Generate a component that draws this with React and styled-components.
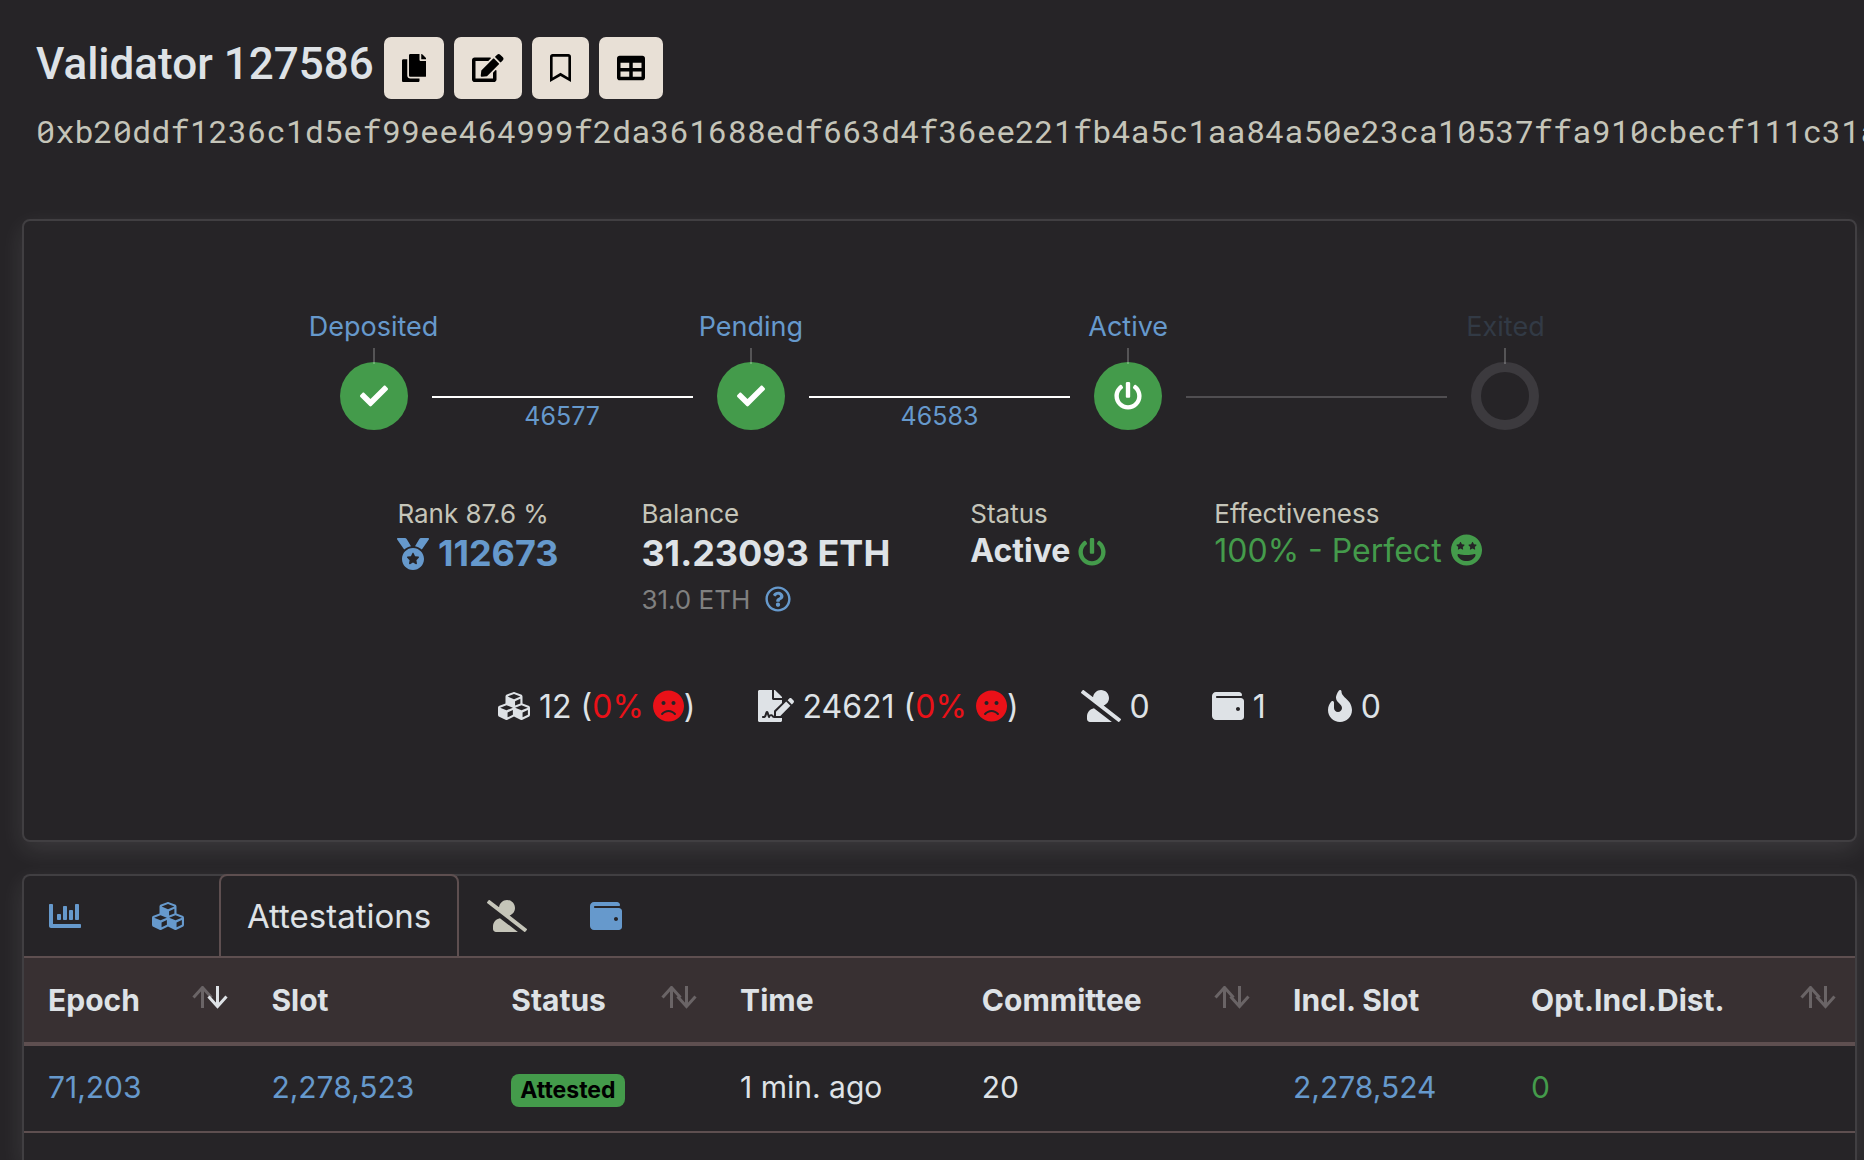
import React from 'react';
import styled, { createGlobalStyle, css } from 'styled-components';
import {
  FaCopy, FaEdit, FaRegBookmark, FaTable, FaCheck, FaPowerOff, FaMedal,
  FaRegQuestionCircle, FaGrinStars, FaCubes, FaFrown, FaFileSignature,
  FaUserSlash, FaWallet, FaFire, FaChartBar,
} from 'react-icons/fa';

const c = {
  bg: '#262427',
  line: '#413f42',
  accentLine: '#5e4f50',
  head: '#383032',
  text: '#dee2e6',
  muted: '#c5c5b9',
  dim: '#808080',
  blue: '#6699cc',
  green: '#449b4b',
  red: '#ea1118',
  cream: '#e8e0d6',
};

const Global = createGlobalStyle`
  *, *::before, *::after { box-sizing: border-box; }
  body {
    margin: 0;
    background: ${c.bg};
    color: ${c.text};
    font-family: Inter, "Liberation Sans", sans-serif;
    font-size: 32px;
    overflow: hidden;
  }
  a { color: ${c.blue}; text-decoration: none; }
  button { font: inherit; color: inherit; border: 0; background: none; padding: 0; cursor: pointer; }
  svg { vertical-align: -0.125em; }
`;

/* Icons whose glyph box is not square keep their own aspect ratio. */
const CopyIcon = styled(FaCopy)`width: 0.875em;`;
const EditIcon = styled(FaEdit)`width: 1.125em;`;
const BookmarkIcon = styled(FaRegBookmark)`width: 0.75em;`;
const SignatureIcon = styled(FaFileSignature)`width: 1.125em;`;
const SlashIcon = styled(FaUserSlash)`width: 1.25em;`;
const FireIcon = styled(FaFire)`width: 0.75em;`;
const FrownIcon = styled(FaFrown)`width: 0.97em;`;
const StarsIcon = styled(FaGrinStars)`width: 0.97em;`;

const Page = styled.main`
  display: flex;
  flex-direction: column;
  height: 100vh;
  padding: 37px 7px 0 22px;
`;

const Header = styled.header`
  display: flex;
  flex-wrap: wrap;
  align-items: flex-start;
  padding-left: 14px;
  gap: 10px;
`;

const Title = styled.h1`
  margin: 0;
  font-family: Roboto, "Liberation Sans", sans-serif;
  font-size: 44px;
  font-weight: 500;
  line-height: 54px;
`;

const ToolButton = styled.button`
  height: 62px;
  padding: 0 18px;
  border-radius: 7px;
  background: ${c.cream};
  color: #000;
  font-size: 28px;
  line-height: 62px;
`;

const PublicKey = styled.p`
  margin: 12px -7px 68px 14px;
  color: ${c.muted};
  font-family: "Roboto Mono", "DejaVu Sans Mono", "Liberation Mono", monospace;
  font-size: 32px;
  line-height: 40px;
  white-space: nowrap;
  overflow: hidden;
`;

const cardFrame = css`
  flex-shrink: 0;
  border: 2px solid ${c.line};
  border-radius: 8px;
  background: ${c.bg};
  box-shadow: 0 8px 24px rgba(255, 255, 255, 0.1);
`;

const Overview = styled.section`
  ${cardFrame}
  padding: 85px 24px 113px;
`;

const Steps = styled.div`
  display: flex;
  width: 100%;
  max-width: 1200px;
  margin: 0 auto;
`;

const StepBox = styled.div`
  display: flex;
  flex-direction: column;
  align-items: center;
  flex: 0 0 68px;
  width: 68px;
  min-width: 0;
`;

const StepLabel = styled.a`
  color: ${(p) => (p.$off ? '#323a45' : c.blue)};
  font-size: 27px;
  line-height: 42px;
`;

const Tick = styled.span`
  z-index: 1;
  width: 2px;
  height: 16px;
  margin-bottom: -2px;
  background: rgba(255, 255, 255, 0.22);
`;

const Circle = styled.span`
  display: flex;
  align-items: center;
  justify-content: center;
  width: 68px;
  height: 68px;
  border-radius: 50%;
  color: #fff;
  font-size: 28px;
  ${(p) => (p.$off ? 'border: 10px solid #3c3a3e;' : `background: ${c.green};`)}
`;

const Connector = styled.div`
  flex: 1;
  height: 38px;
  margin: 90px 24px 0;
  border-top: 2px solid ${(p) => (p.$off ? '#504e51' : '#fff')};
  font-size: 25px;
  line-height: 36px;
  text-align: center;
`;

const Stats = styled.div`
  display: flex;
  justify-content: center;
  gap: 80px;
  margin-top: 60px;
`;

const Stat = styled.div`
  min-width: 164px;
  white-space: nowrap;
`;

const StatLabel = styled.div`
  color: ${c.muted};
  font-size: 26px;
  line-height: 40px;
`;

const StatValue = styled.div`
  font-size: ${(p) => (p.$big ? 36 : 32)}px;
  font-weight: ${(p) => (p.$plain ? 400 : 700)};
  line-height: ${(p) => (p.$big ? 38 : 34)}px;
  color: ${(p) => p.$color || c.text};
`;

const StatSub = styled.div`
  margin-top: 8px;
  color: ${c.dim};
  font-size: 26px;
  line-height: 40px;
  a { margin-left: 7px; }
`;

const Icon = styled.span`
  font-size: ${(p) => p.$size || 32}px;
  color: ${(p) => p.$color || 'inherit'};
`;

const Counters = styled.div`
  display: flex;
  justify-content: center;
  gap: 62px;
  margin-top: 67px;
  line-height: 40px;
  white-space: nowrap;
`;

const Bad = styled.span`
  color: ${c.red};
`;

const Details = styled.section`
  ${cardFrame}
  flex: 1 0 0;
  min-height: 0;
  margin-top: 32px;
  border-bottom: 0;
  border-radius: 8px 8px 0 0;
`;

const Tabs = styled.nav`
  display: flex;
  margin-top: -2px;
  border-bottom: 2px solid ${c.accentLine};
`;

const Tab = styled.a`
  height: 82px;
  padding: ${(p) => p.$pad};
  line-height: 85px;
  color: ${(p) => p.$color || c.blue};
  ${(p) => p.$active && css`
    color: ${c.text};
    border: 2px solid ${c.accentLine};
    border-bottom: 0;
    border-radius: 8px 8px 0 0;
    background: ${c.bg};
    font-size: 33px;
    line-height: 80px;
  `}
`;

const Table = styled.table`
  width: 100%;
  table-layout: fixed;
  border-collapse: separate;
  border-spacing: 0;
  font-size: 30px;
`;

const Th = styled.th`
  width: ${(p) => p.$width}%;
  height: 88px;
  padding: 0 19px 0 24px;
  border-bottom: 4px solid ${c.accentLine};
  background: ${c.head};
  text-align: left;
  font-weight: 700;
  white-space: nowrap;
`;

const SortButton = styled.button`
  display: flex;
  align-items: center;
  justify-content: space-between;
  width: 100%;
`;

const Td = styled.td`
  height: 87px;
  padding: 0 24px 4px;
  border-bottom: 2px solid ${c.accentLine};
  color: ${(p) => p.$color || c.text};
  line-height: 40px;
  white-space: nowrap;
`;

const Badge = styled.span`
  display: inline-block;
  padding: 0 9px;
  border-radius: 8px;
  background: ${c.green};
  color: #000;
  font-size: 23px;
  font-weight: 700;
  line-height: 33px;
`;

function SortArrows({ down }) {
  return (
    <svg width="36" height="28" viewBox="0 0 36 28" fill="none" strokeWidth="3" aria-hidden="true">
      <path d="M10.5 22V1.5M1.5 11.5L10.5 1.5L19.5 11.5" stroke="#6a6466" />
      <path d="M25.5 0V20.5M16.5 10.5L25.5 20.5L34.5 10.5" stroke={down ? c.text : '#6a6466'} />
    </svg>
  );
}

function Step({ label, off, children }) {
  return (
    <StepBox>
      <StepLabel href="#" $off={off}>{label}</StepLabel>
      <Tick />
      <Circle $off={off}>{children}</Circle>
    </StepBox>
  );
}

const columns = [
  { label: 'Epoch', width: 12.2, sort: 'down' },
  { label: 'Slot', width: 13.1 },
  { label: 'Status', width: 12.5, sort: 'both' },
  { label: 'Time', width: 13.2 },
  { label: 'Committee', width: 17, sort: 'both' },
  { label: 'Incl. Slot', width: 13 },
  { label: 'Opt.Incl.Dist.', width: 19, sort: 'both' },
];

export default function App() {
  return (
    <Page>
      <Global />
      <Header>
        <Title>Validator 127586</Title>
        <ToolButton aria-label="Copy public key"><CopyIcon /></ToolButton>
        <ToolButton aria-label="Edit name"><EditIcon /></ToolButton>
        <ToolButton aria-label="Add to watchlist"><BookmarkIcon /></ToolButton>
        <ToolButton aria-label="Open dashboard"><FaTable /></ToolButton>
      </Header>
      <PublicKey>
        0xb20ddf1236c1d5ef99ee464999f2da361688edf663d4f36ee221fb4a5c1aa84a50e23ca10537ffa910cbecf111c31a
      </PublicKey>

      <Overview>
        <Steps>
          <Step label="Deposited"><FaCheck /></Step>
          <Connector><a href="#">46577</a></Connector>
          <Step label="Pending"><FaCheck /></Step>
          <Connector><a href="#">46583</a></Connector>
          <Step label="Active"><FaPowerOff /></Step>
          <Connector $off />
          <Step label="Exited" off />
        </Steps>

        <Stats>
          <Stat>
            <StatLabel>Rank 87.6 %</StatLabel>
            <StatValue $big $color={c.blue}><Icon><FaMedal /></Icon> 112673</StatValue>
          </Stat>
          <Stat>
            <StatLabel>Balance</StatLabel>
            <StatValue $big>31.23093 ETH</StatValue>
            <StatSub>31.0 ETH <a href="#" aria-label="Effective balance help"><FaRegQuestionCircle /></a></StatSub>
          </Stat>
          <Stat>
            <StatLabel>Status</StatLabel>
            <StatValue>Active <Icon $size={28} $color={c.green}><FaPowerOff /></Icon></StatValue>
          </Stat>
          <Stat>
            <StatLabel>Effectiveness</StatLabel>
            <StatValue $plain $color={c.green}>100% - Perfect <StarsIcon /></StatValue>
          </Stat>
        </Stats>

        <Counters>
          <span><FaCubes /> 12 (<Bad>0% <FrownIcon /></Bad>)</span>
          <span><SignatureIcon /> 24621 (<Bad>0% <FrownIcon /></Bad>)</span>
          <span><SlashIcon /> 0</span>
          <span><FaWallet /> 1</span>
          <span><FireIcon /> 0</span>
        </Counters>
      </Overview>

      <Details>
        <Tabs>
          <Tab href="#" $pad="0 36px 0 25px" aria-label="Charts"><FaChartBar /></Tab>
          <Tab href="#" $pad="0 35px" aria-label="Blocks"><FaCubes /></Tab>
          <Tab href="#" $pad="0 26px" $active>Attestations</Tab>
          <Tab href="#" $pad="0 28px" $color={c.muted} aria-label="Slashings"><SlashIcon /></Tab>
          <Tab href="#" $pad="0 35px" aria-label="Deposits"><FaWallet /></Tab>
        </Tabs>
        <Table>
          <thead>
            <tr>
              {columns.map((col) => (
                <Th key={col.label} scope="col" $width={col.width}>
                  {col.sort ? (
                    <SortButton>
                      {col.label}
                      <SortArrows down={col.sort === 'down'} />
                    </SortButton>
                  ) : col.label}
                </Th>
              ))}
            </tr>
          </thead>
          <tbody>
            <tr>
              <Td><a href="#">71,203</a></Td>
              <Td><a href="#">2,278,523</a></Td>
              <Td><Badge>Attested</Badge></Td>
              <Td>1 min. ago</Td>
              <Td>20</Td>
              <Td><a href="#">2,278,524</a></Td>
              <Td $color={c.green}>0</Td>
            </tr>
          </tbody>
        </Table>
      </Details>
    </Page>
  );
}
